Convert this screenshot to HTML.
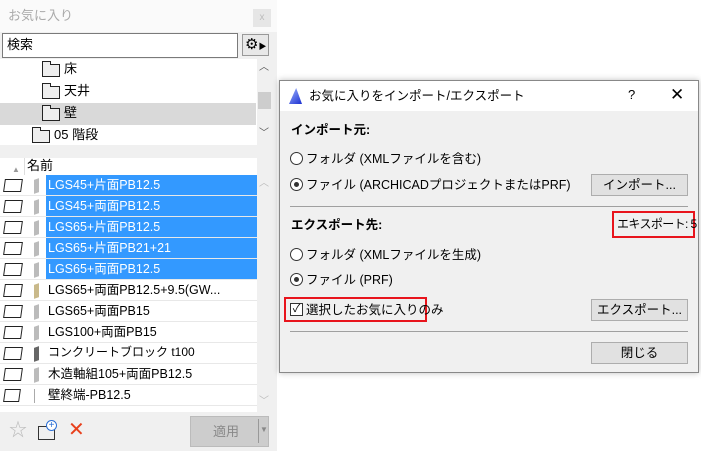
<!DOCTYPE html><html><head><meta charset="utf-8"><style>
*{box-sizing:border-box;margin:0;padding:0}
body{width:701px;height:451px;background:#fff;position:relative;overflow:hidden;font-family:"Liberation Sans","Noto Sans CJK JP",sans-serif;font-size:12px;color:#000;line-height:1.15;white-space:nowrap}
.a{position:absolute}
.row{position:absolute;left:0;width:257px;height:21px;border-bottom:1px solid #e8e8e8}
.row .t{position:absolute;left:48px;top:3px;font-size:12.5px}
.row.s .t{color:#fff}
.row.s .bg{position:absolute;left:46px;top:0;right:0;height:20px;background:#3399ff}
.ic{position:absolute;left:4px;top:4px;width:18px;height:13px;border:1px solid #222;transform:skewX(-8deg)}
.w{position:absolute;left:34px;top:4px;width:5px;height:14px;background:#bbb;transform:skewY(-20deg)}
.btn{position:absolute;background:#e1e1e1;border:1px solid #adadad;text-align:center;font-size:12.5px;line-height:21px}
.rad{position:absolute;width:13px;height:13px;border:1px solid #333;border-radius:50%;background:#fff}
.rad.on::after{content:"";position:absolute;left:3px;top:3px;width:5px;height:5px;border-radius:50%;background:#333}
.lab{position:absolute;font-size:12.5px;margin-top:2px}
.fold{position:absolute;width:18px;height:13px;border:1px solid #222;background:#eee}
.fold::before{content:"";position:absolute;left:-1px;top:-4px;width:7px;height:3px;border:1px solid #222;border-bottom:none;background:#eee}
</style></head><body>
<div class="a" style="left:0;top:0;width:277px;height:451px;background:#f0f0f0"></div>
<div class="a" style="left:0;top:0;width:277px;height:32px;background:#fafafa"></div>
<div class="a" style="left:8px;top:9px;color:#aaa;font-size:13px">お気に入り</div>
<div class="a" style="left:253px;top:9px;width:18px;height:18px;background:#e6e6e6;color:#bbb;font-size:10px;text-align:center;line-height:18px">x</div>
<div class="a" style="left:2px;top:33px;width:236px;height:25px;background:#fff;border:1px solid #7a7a7a;padding:4px 4px;font-size:13px">検索</div>
<div class="a" style="left:242px;top:34px;width:27px;height:22px;border:1px solid #999;background:#e8e8e8;font-size:15px;line-height:20px;padding-left:2px">⚙<span style="font-size:8px">▶</span></div>
<div class="a" style="left:0;top:59px;width:257px;height:86px;background:#fff"></div>
<div class="a" style="left:0;top:103px;width:256px;height:22px;background:#d9d9d9"></div>
<div class="fold" style="left:42px;top:64px"></div><div class="a" style="left:64px;top:62px;font-size:13px">床</div>
<div class="fold" style="left:42px;top:86px"></div><div class="a" style="left:64px;top:84px;font-size:13px">天井</div>
<div class="fold" style="left:42px;top:108px"></div><div class="a" style="left:64px;top:106px;font-size:13px">壁</div>
<div class="fold" style="left:32px;top:130px"></div><div class="a" style="left:54px;top:128px;font-size:13px">05 階段</div>
<div class="a" style="left:257px;top:59px;width:20px;height:86px;background:#f0f0f0"></div>
<div class="a" style="left:258px;top:92px;width:13px;height:17px;background:#cdcdcd"></div>
<div class="a" style="left:259px;top:62px;font-size:10px;color:#555">︿</div>
<div class="a" style="left:259px;top:128px;font-size:10px;color:#555">﹀</div>
<div class="a" style="left:0;top:158px;width:257px;height:254px;background:#fff"></div>
<div class="a" style="left:12px;top:165px;font-size:8px;color:#999">▲</div>
<div class="a" style="left:24px;top:158px;width:1px;height:17px;background:#ddd"></div>
<div class="a" style="left:27px;top:159px;font-size:13px">名前</div>
<div class="row s" style="top:175px"><div class="bg"></div><div class="ic"></div><div class="w"></div><div class="t">LGS45+片面PB12.5</div></div>
<div class="row s" style="top:196px"><div class="bg"></div><div class="ic"></div><div class="w"></div><div class="t">LGS45+両面PB12.5</div></div>
<div class="row s" style="top:217px"><div class="bg"></div><div class="ic"></div><div class="w"></div><div class="t">LGS65+片面PB12.5</div></div>
<div class="row s" style="top:238px"><div class="bg"></div><div class="ic"></div><div class="w"></div><div class="t">LGS65+片面PB21+21</div></div>
<div class="row s" style="top:259px"><div class="bg"></div><div class="ic"></div><div class="w"></div><div class="t">LGS65+両面PB12.5</div></div>
<div class="row" style="top:280px"><div class="ic"></div><div class="w" style="background:#c9b98a"></div><div class="t">LGS65+両面PB12.5+9.5(GW...</div></div>
<div class="row" style="top:301px"><div class="ic"></div><div class="w"></div><div class="t">LGS65+両面PB15</div></div>
<div class="row" style="top:322px"><div class="ic"></div><div class="w"></div><div class="t">LGS100+両面PB15</div></div>
<div class="row" style="top:343px"><div class="ic"></div><div class="w" style="background:#666"></div><div class="t" style="font-size:12px">コンクリートブロック t100</div></div>
<div class="row" style="top:364px"><div class="ic"></div><div class="w"></div><div class="t">木造軸組105+両面PB12.5</div></div>
<div class="row" style="top:385px"><div class="ic" style="width:16px"></div><div class="w" style="width:1px;background:#aaa;transform:none"></div><div class="t">壁終端-PB12.5</div></div>
<div class="a" style="left:259px;top:178px;font-size:10px;color:#bbb">︿</div>
<div class="a" style="left:259px;top:396px;font-size:10px;color:#bbb">﹀</div>
<div class="a" style="left:9px;top:420px;font-size:18px;color:#bbb">☆</div>
<div class="a" style="left:38px;top:426px;width:17px;height:14px;border:1px solid #333"></div>
<div class="a" style="left:46px;top:420px;width:11px;height:11px;border:1px solid #2a6fd6;border-radius:50%;background:#fff;color:#2a6fd6;font-size:10px;line-height:9px;text-align:center">+</div>
<div class="a" style="left:68px;top:419px;font-size:20px;color:#e8401c">✕</div>
<div class="a" style="left:190px;top:416px;width:79px;height:31px;background:#cdcdcd;border:1px solid #bbb;color:#888;font-size:13px;line-height:29px;padding-left:22px">適用</div>
<div class="a" style="left:258px;top:419px;width:1px;height:24px;background:#999"></div>
<div class="a" style="left:260px;top:425px;font-size:8px;color:#888">▼</div>
<div class="a" style="left:279px;top:80px;width:420px;height:293px;background:#f0f0f0;border:1px solid #888;box-shadow:0 0 6px rgba(0,0,0,.25)"></div>
<div class="a" style="left:280px;top:81px;width:418px;height:30px;background:#fff"></div>
<div class="a" style="left:289px;top:88px;width:13px;height:16px;background:linear-gradient(135deg,#9fb5ff,#1a2fd0);clip-path:polygon(0 100%,55% 0,100% 100%)"></div>
<div class="a" style="left:309px;top:89px;font-size:12.5px">お気に入りをインポート/エクスポート</div>
<div class="a" style="left:628px;top:88px;font-size:13px">?</div>
<div class="a" style="left:670px;top:85px;font-size:17px;font-weight:300">✕</div>
<div class="lab" style="left:291px;top:121px;font-weight:bold">インポート元:</div>
<div class="rad" style="left:290px;top:152px"></div><div class="lab" style="left:306px;top:150px">フォルダ (XMLファイルを含む)</div>
<div class="rad on" style="left:290px;top:178px"></div><div class="lab" style="left:306px;top:176px">ファイル (ARCHICADプロジェクトまたはPRF)</div>
<div class="btn" style="left:591px;top:174px;width:97px;height:22px">インポート...</div>
<div class="a" style="left:290px;top:206px;width:398px;height:1px;background:#a0a0a0"></div>
<div class="lab" style="left:291px;top:216px;font-weight:bold">エクスポート先:</div>
<div class="a" style="left:612px;top:211px;width:83px;height:27px;border:2px solid #e8141c"></div>
<div class="lab" style="left:617px;top:216px;font-size:12px;letter-spacing:-0.6px">エキスポート: 5</div>
<div class="rad" style="left:290px;top:248px"></div><div class="lab" style="left:306px;top:246px">フォルダ (XMLファイルを生成)</div>
<div class="rad on" style="left:290px;top:273px"></div><div class="lab" style="left:306px;top:271px">ファイル (PRF)</div>
<div class="a" style="left:284px;top:297px;width:143px;height:25px;border:2px solid #e8141c"></div>
<div class="a" style="left:290px;top:303px;width:13px;height:13px;border:1px solid #333;background:#fff;font-size:11px;line-height:11px;text-align:center">✓</div>
<div class="lab" style="left:306px;top:301px">選択したお気に入りのみ</div>
<div class="btn" style="left:591px;top:299px;width:97px;height:22px">エクスポート...</div>
<div class="a" style="left:290px;top:331px;width:398px;height:1px;background:#a0a0a0"></div>
<div class="btn" style="left:591px;top:342px;width:97px;height:22px">閉じる</div>
</body></html>
